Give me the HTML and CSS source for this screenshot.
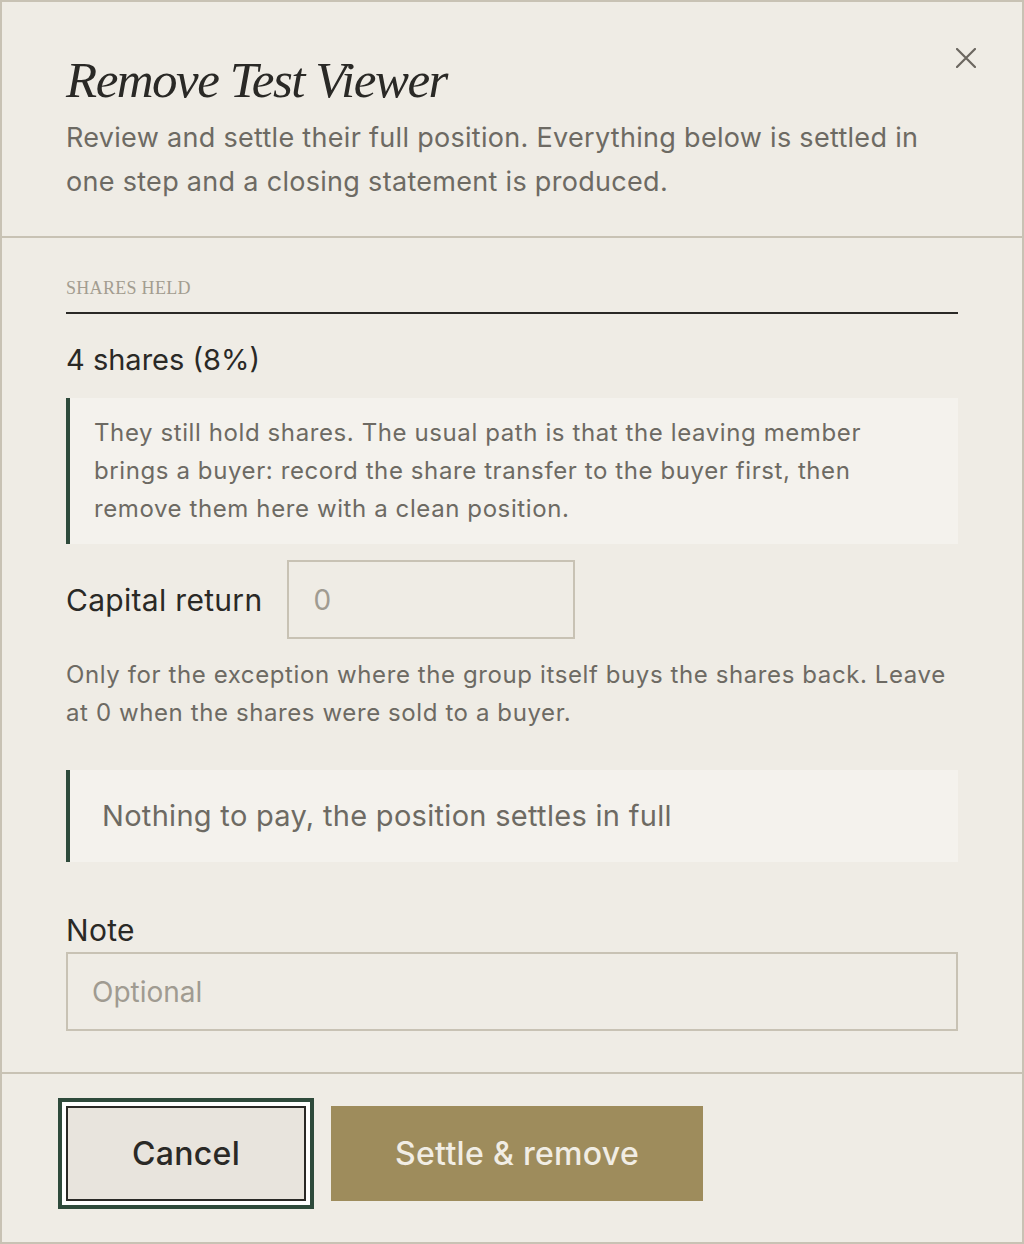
FILE: index.html
```html
<!DOCTYPE html>
<html lang="en">
<head>
  <meta charset="UTF-8" />
  <meta name="viewport" content="width=device-width, initial-scale=1.0" />
  <title>Remove Test Viewer</title>
  <link rel="stylesheet" href="styles.css">
</head>
<body>
  <div class="dialog">
    <div class="dialog-header">
      <h2 class="dialog-title">Remove Test Viewer</h2>
      <p class="dialog-sub">Review and settle their full position. Everything below is settled in one step and a closing statement is produced.</p>
      <button class="close-btn" aria-label="Close">
        <svg width="20" height="20" viewBox="0 0 20 20"><path d="M1 1 L19 19 M19 1 L1 19" stroke="#6b6760" stroke-width="2.2" stroke-linecap="round"/></svg>
      </button>
    </div>

    <div class="dialog-body">
      <div class="section-label">Shares held</div>
      <div class="shares">4 shares (8%)</div>
      <div class="callout">They still hold shares. The usual path is that the leaving member brings a buyer: record the share transfer to the buyer first, then remove them here with a clean position.</div>

      <div class="field-row">
        <label class="field-label" for="capital">Capital return</label>
        <input type="text" id="capital" class="input small" placeholder="0" />
      </div>
      <p class="help">Only for the exception where the group itself buys the shares back. Leave at 0 when the shares were sold to a buyer.</p>

      <div class="callout big">Nothing to pay, the position settles in full</div>

      <label class="field-label note-label" for="note">Note</label>
      <input type="text" id="note" class="input" placeholder="Optional" />
    </div>

    <div class="dialog-footer">
      <button class="btn btn-cancel">Cancel</button>
      <button class="btn btn-primary">Settle &amp; remove</button>
    </div>
  </div>
</body>
</html>
```

FILE: styles.css
```css
* {
  box-sizing: border-box;
}
body {
  margin: 0;
  font-family: Inter, "Noto Sans", sans-serif;
  background: #efece5;
  color: #2a2926;
}
.dialog {
  width: 1024px;
  height: 1244px;
  border: 2px solid #c8c2b4;
  background: #efece5;
}
.dialog-header {
  position: relative;
  padding: 48px 64px 32px;
  border-bottom: 2px solid #c8c2b4;
}
.dialog-title {
  margin: 0;
  font-family: "Liberation Serif", serif;
  font-style: italic;
  font-weight: 400;
  font-size: 51px;
  letter-spacing: -1.5px;
  line-height: 60px;
  color: #2a2926;
}
.dialog-sub {
  margin: 6px 0 0;
  font-size: 27px;
  letter-spacing: 0.3px;
  line-height: 44px;
  color: #6d6a63;
}
.close-btn {
  position: absolute;
  top: 44px;
  right: 44px;
  width: 24px;
  height: 24px;
  padding: 2px;
  border: none;
  background: none;
  cursor: pointer;
}
.dialog-body {
  padding: 40px 64px 41px;
}
.section-label {
  font-family: "Liberation Serif", serif;
  font-size: 18px;
  letter-spacing: 0.3px;
  text-transform: uppercase;
  line-height: 20px;
  color: #a39d90;
  padding-bottom: 14px;
  border-bottom: 2px solid #2a2926;
}
.shares {
  margin-top: 22px;
  font-size: 29px;
  line-height: 48px;
}
.callout {
  margin-top: 14px;
  padding: 16px 24px;
  background: #f4f2ed;
  border-left: 4px solid #2e4a3b;
  font-size: 24px;
  letter-spacing: 0.6px;
  line-height: 38px;
  color: #6d6a63;
}
.callout.big {
  margin-top: 38px;
  padding: 24px 32px;
  font-size: 29px;
  letter-spacing: 0.3px;
  line-height: 44px;
}
.field-row {
  margin-top: 16px;
  display: flex;
  align-items: center;
  gap: 25px;
}
.field-label {
  display: block;
  font-size: 30px;
  letter-spacing: 0.3px;
  line-height: 44px;
  color: #2a2926;
}
.input {
  display: block;
  width: 100%;
  height: 79px;
  padding: 0 24px;
  border: 2px solid #c8c2b4;
  background: #efece5;
  font-family: inherit;
  font-size: 28px;
  color: #2a2926;
  outline: none;
}
.input.small {
  width: 288px;
}
.input::placeholder {
  color: #a09b91;
}
.help {
  margin: 17px 0 0;
  font-size: 24px;
  letter-spacing: 0.6px;
  line-height: 38px;
  color: #6d6a63;
}
.note-label {
  margin-top: 46px;
}
.dialog-footer {
  border-top: 2px solid #c8c2b4;
  padding: 32px 64px;
  display: flex;
  gap: 25px;
}
.btn {
  height: 95px;
  padding: 0 64px;
  font-family: inherit;
  font-size: 32px;
  font-weight: 500;
  letter-spacing: 0.3px;
  border: none;
  cursor: pointer;
}
.btn-cancel {
  background: #e8e4dd;
  color: #2a2926;
  border: 2px solid #2a2926;
  box-shadow: 0 0 0 4px #ffffff, 0 0 0 8px #2e4a3b;
}
.btn-primary {
  background: #9e8c5c;
  color: #f1ede4;
}
```
